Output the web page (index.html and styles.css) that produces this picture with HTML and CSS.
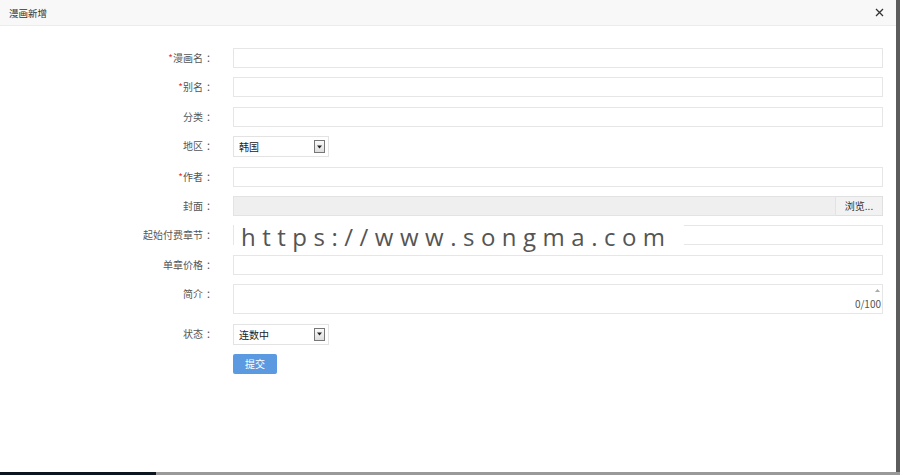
FILE: index.html
```html
<!DOCTYPE html>
<html>
  <head>
    <meta charset="utf-8">
    <title>漫画新增</title>
    <link rel="stylesheet" href="styles.css">
  </head>
  <body>
    <div class="frame">
      <div class="dialog">
        <header class="head">
          <span class="title">漫画新增</span>
          <svg class="close" width="9" height="9" viewBox="0 0 9 9">
            <path d="M1 1L8 8M8 1L1 8" stroke="#333" stroke-width="1.3" fill="none"/>
          </svg>
        </header>

        <form class="form">
          <label class="lbl"><i>*</i>漫画名<b>：</b></label>
          <div class="field"></div>

          <label class="lbl"><i>*</i>别名<b>：</b></label>
          <div class="field"></div>

          <label class="lbl">分类<b>：</b></label>
          <div class="field"></div>

          <label class="lbl">地区<b>：</b></label>
          <div class="pick">
            <span>韩国</span>
            <span class="arrow"><svg width="7" height="4" viewBox="0 0 7 4"><path d="M1 0.5h5L3.5 3.5z" fill="#222"/></svg></span>
          </div>

          <label class="lbl"><i>*</i>作者<b>：</b></label>
          <div class="field"></div>

          <label class="lbl">封面<b>：</b></label>
          <div class="file">
            <div class="file-path"></div>
            <div class="file-btn">浏览...</div>
          </div>

          <label class="lbl">起始付费章节<b>：</b></label>
          <div class="field wm-host">
            <span class="wm">https://www.songma.com</span>
          </div>

          <label class="lbl">单章价格<b>：</b></label>
          <div class="field"></div>

          <label class="lbl">简介<b>：</b></label>
          <div class="field area">
            <svg class="scroll-up" width="5" height="3" viewBox="0 0 5 3"><path d="M0 3L2.5 0L5 3z" fill="#aaa"/></svg>
            <span class="count">0/100</span>
          </div>

          <label class="lbl">状态<b>：</b></label>
          <div class="pick">
            <span>连数中</span>
            <span class="arrow"><svg width="7" height="4" viewBox="0 0 7 4"><path d="M1 0.5h5L3.5 3.5z" fill="#222"/></svg></span>
          </div>

          <span></span>
          <div class="submit">提交</div>
        </form>
      </div>
      <div class="edge"></div>
    </div>
    <div class="taskbar">
      <div class="task-dark"></div>
      <div class="task-rest"></div>
    </div>
  </body>
</html>
```

FILE: styles.css
```css
html, body {
  width: 100%;
  height: 100%;
  margin: 0;
  padding: 0;
  background-color: #fff;
  color: #555;
  font-family: "Noto Sans CJK SC", "Noto Sans", sans-serif;
  font-size: 10px;
  overflow: hidden;
}
.frame {
  display: flex;
  height: 472px;
}
.dialog {
  flex: 1;
  display: flex;
  flex-direction: column;
}
.edge {
  width: 4px;
  background: #5c5c5c;
}
.taskbar {
  display: flex;
  height: 3px;
}
.task-dark {
  width: 156px;
  background: #0b1520;
}
.task-rest {
  flex: 1;
  background: #999;
}
.head {
  height: 25px;
  display: flex;
  align-items: center;
  justify-content: space-between;
  padding: 0 12px 0 9px;
  background: #f8f8f8;
  border-bottom: 1px solid #ececec;
}
.title {
  color: #333;
  font-size: 9.5px;
}
.form {
  display: grid;
  grid-template-columns: 213px 650px;
  column-gap: 20px;
  row-gap: 9.4px;
  padding-top: 22px;
  align-items: start;
}
.lbl {
  text-align: right;
  line-height: 20px;
  color: #555;
}
.lbl i {
  font-style: normal;
  color: #e33;
}
.lbl b {
  display: inline-block;
  width: 10px;
  font-weight: normal;
  text-align: center;
  text-indent: 3px;
}
.field {
  height: 20px;
  box-sizing: border-box;
  border: 1px solid #e6e6e6;
  background: #fff;
}
.pick {
  width: 96px;
  height: 21px;
  box-sizing: border-box;
  border: 1px solid #e3e3e3;
  display: flex;
  align-items: center;
  justify-content: space-between;
  padding: 0 3px 0 5px;
  color: #222;
}
.arrow {
  width: 9px;
  height: 11px;
  border: 1px solid #777;
  background: linear-gradient(#fafafa, #ddd);
  display: flex;
  align-items: center;
  justify-content: center;
}
.file {
  display: flex;
  height: 20px;
}
.file-path {
  flex: 1;
  background: #efefef;
  border: 1px solid #e3e3e3;
}
.file-btn {
  width: 46px;
  border: 1px solid #e0e0e0;
  border-left: none;
  background: #f2f2f2;
  color: #333;
  line-height: 18px;
  text-align: center;
}
.wm-host {
  position: relative;
}
.wm {
  position: absolute;
  left: 0;
  top: -1px;
  width: 443px;
  height: 28px;
  padding-left: 7px;
  background: #fff;
  font-family: "Open Sans", sans-serif;
  font-size: 24px;
  line-height: 24px;
  letter-spacing: 6.5px;
  color: #555;
  white-space: nowrap;
}
.area {
  height: 30px;
  position: relative;
}
.scroll-up {
  position: absolute;
  right: 2px;
  top: 4px;
}
.count {
  position: absolute;
  right: 1px;
  bottom: 2px;
  color: #555;
}
.submit {
  width: 44px;
  height: 20px;
  border-radius: 2px;
  background: #5b9ae0;
  color: #fff;
  line-height: 20px;
  text-align: center;
}
```
